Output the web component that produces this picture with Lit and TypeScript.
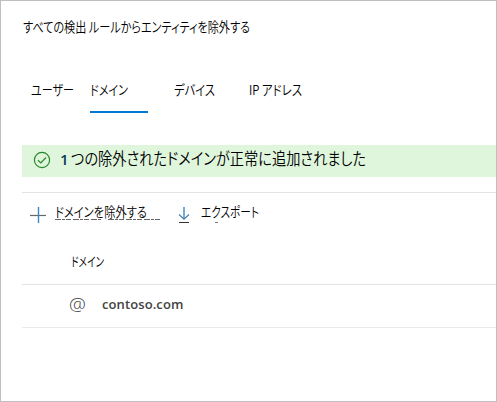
import { LitElement, html, css } from "lit";
import { customElement, property } from "lit/decorators.js";

/** One line of text, fitted to a given width. */
@customElement("fit-text")
class FitText extends LitElement {
  @property({ type: Number }) width = 0;
  @property({ type: Number }) size = 13.5;
  @property() text = "";
  static styles = css`
    :host { display: block; flex: none; }
    svg { display: block; overflow: visible; }
    text {
      font-family: "Noto Sans CJK JP", sans-serif;
      font-weight: 350;
      font-feature-settings: "palt";
      fill: currentColor;
      white-space: pre;
    }
  `;
  render() {
    return html`<svg width=${this.width} height="20">
      <text x="0" y="15" font-size=${this.size} textLength=${this.width} lengthAdjust="spacingAndGlyphs">${this.text}</text>
    </svg>`;
  }
}

@customElement("app-root")
class AppRoot extends LitElement {
  static styles = css`
    :host {
      display: block;
      box-sizing: border-box;
      width: 497px;
      height: 402px;
      border: 1px solid #bfbfbf;
      background: #fff;
      color: #000;
      padding: 16px 0 0 21px;
      overflow: hidden;
    }
    svg { display: block; flex: none; }
    .title { height: 63px; padding-left: 1px; }
    .tabs { display: flex; height: 65px; }
    .tab { box-sizing: border-box; height: 33px; }
    .user { width: 68px; padding-left: 9px; }
    .domain { width: 58px; border-bottom: 2px solid #0078d4; margin-right: 26px; }
    .device { width: 75px; }
    .banner {
      display: flex;
      box-sizing: border-box;
      height: 32px;
      padding: 5px 0 0 11px;
      background: #dff6dd;
    }
    .banner svg { margin-top: 1px; }
    .count {
      width: 11px;
      margin-left: 9px;
      font: 600 15px/18px "Open Sans", sans-serif;
      color: #0b3a52;
    }
    .bar {
      display: flex;
      box-sizing: border-box;
      margin-top: 15px;
      height: 49px;
      border-top: 1px solid #e3e3e3;
      padding: 9px 0 0 8px;
    }
    .plus { margin-top: 5px; }
    .exclude { margin-left: 8px; width: 105px; }
    .exclude svg { margin-top: -3px; }
    .down { margin: 4px 0 0 18px; }
    .export { margin-left: 11px; }
    .export svg { margin: 0 0 0 14px; }
    .head {
      box-sizing: border-box;
      height: 44px;
      padding: 10px 0 0 49px;
      border-bottom: 1px solid #e3e3e3;
    }
    .row {
      display: flex;
      align-items: center;
      box-sizing: border-box;
      height: 43px;
      padding: 0 0 4px 47px;
      border-bottom: 1px solid #ebebeb;
      font-family: "Open Sans", sans-serif;
      color: #424242;
    }
    .at { width: 33px; font-size: 19px; font-weight: 300; color: #404040; }
    .name { font-size: 13px; font-weight: 600; letter-spacing: 0.1px; }
  `;

  render() {
    return html`
      <div class="title"><fit-text width="227" size="14" text="すべての検出 ルールからエンティティを除外する"></fit-text></div>
      <div class="tabs">
        <div class="tab user"><fit-text width="43" text="ユーザー"></fit-text></div>
        <div class="tab domain"><fit-text width="38" text="ドメイン"></fit-text></div>
        <div class="tab device"><fit-text width="41" text="デバイス"></fit-text></div>
        <div class="tab"><fit-text width="53" text="IP アドレス"></fit-text></div>
      </div>
      <div class="banner">
        <svg width="18" height="18" viewBox="0 0 18 18" fill="none" stroke="#28882a" stroke-width="1.2">
          <circle cx="9" cy="9" r="7.6" /><path d="M5 9.3 7.8 12 13 6.5" />
        </svg>
        <span class="count">1</span>
        <fit-text width="295" size="16.5" text="つの除外されたドメインが正常に追加されました"></fit-text>
      </div>
      <div class="bar">
        <svg class="plus" width="17" height="17" viewBox="0 0 17 17">
          <path d="M0 8.5H16" stroke="#666" stroke-width="1.2" /><path d="M8.5 0V16" stroke="#3c86c6" stroke-width="1.4" />
        </svg>
        <div class="exclude">
          <fit-text width="92" text="ドメインを除外する"></fit-text>
          <svg width="105" height="1"><path d="M0 .5H47M53 .5H105" stroke="#666" stroke-dasharray="6 1 3 1 5 2" /></svg>
        </div>
        <svg class="down" width="12" height="18" viewBox="0 0 12 18" fill="none">
          <path d="M6 1V13" stroke="#3c86c6" stroke-width="1.4" />
          <path d="M1 8.5 6 13.2 11 8.5" stroke="#4b7da8" stroke-width="1.2" /><path d="M1 16.5H11" stroke="#333" />
        </svg>
        <div class="export">
          <fit-text width="58" text="エクスポート"></fit-text>
          <svg width="4" height="1"><path d="M0 .5H3" stroke="#777" /></svg>
        </div>
      </div>
      <div class="head"><fit-text width="33" size="13" text="ドメイン"></fit-text></div>
      <div class="row"><span class="at">@</span><span class="name">contoso.com</span></div>
    `;
  }
}
